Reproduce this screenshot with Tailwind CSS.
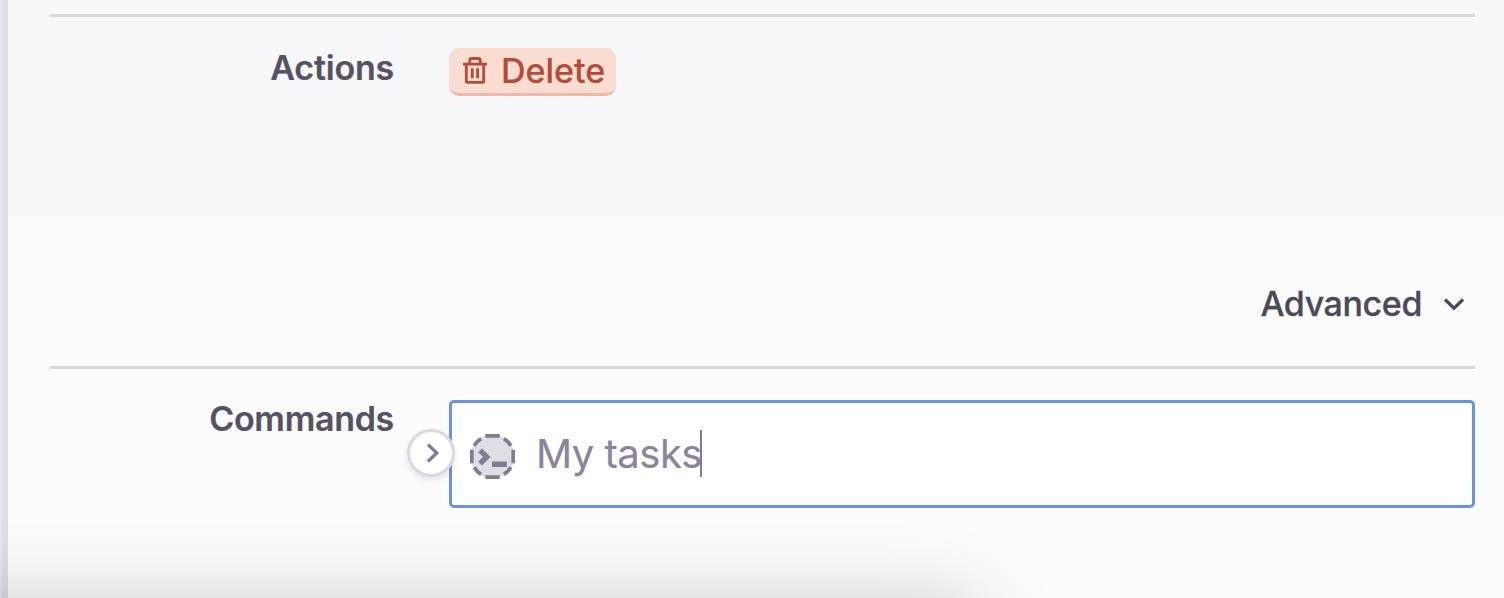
<!DOCTYPE html>
<html lang="en">
<head>
<meta charset="utf-8">
<title>Settings</title>
<script src="https://cdn.jsdelivr.net/npm/@tailwindcss/browser@4"></script>
</head>
<body class="relative flex h-[598px] w-[1504px] overflow-hidden bg-[#fcfcfc] font-['Inter',sans-serif] text-[34px] leading-[48px] text-[#545263]">
  <div class="w-2 shrink-0 border-l-2 border-[#e7e7ec] bg-[#dedde4]"></div>
  <main class="flex flex-1 flex-col">
    <section class="h-[218px] bg-[#f8f8fa] pr-[29px] pl-[42px] pt-[14px]">
      <div class="flex border-t-3 border-[#d9d8e0] pt-[31px]">
        <div class="-mt-1 w-[344px] text-right font-semibold tracking-[-0.2px] [-webkit-text-stroke:0.2px]"><span>Actions</span></div>
        <button class="ml-[55px] flex h-12 w-[167px] items-center rounded-[10px] border-b-3 border-[#efb9a7] bg-[#f9ddd0] pl-[13px] font-medium text-[#b54b3a]">
          <svg class="h-[27px] w-[26px] shrink-0" viewBox="0 0 26 27" fill="none" stroke="currentColor" stroke-width="2.8"><path d="M1 7.2H25M4.3 7V24.2Q4.3 25.3 5.4 25.3H20.6Q21.7 25.3 21.7 24.2V7M7.8 7V3.2Q7.8 1.5 9.5 1.5H16.5Q18.2 1.5 18.2 3.2V7M10.3 11.2V21.2M15.6 11.2V21.2"/></svg>
          <span class="ml-[13px] [-webkit-text-stroke:0.2px]">Delete</span>
        </button>
      </div>
    </section>
    <section class="flex flex-1 flex-col pr-[29px] pl-[42px]">
      <div class="flex h-[148px] items-center justify-end pt-[24px] pr-[10px] font-medium text-[#4b4a58]">
        <span class="tracking-[-0.4px] [-webkit-text-stroke:0.3px]">Advanced</span>
        <svg class="ml-[21px] h-[14px] w-[22px]" viewBox="0 0 22 14" fill="none" stroke="currentColor" stroke-width="3.2"><path d="M2 2.5L11 11.2L20 2.5"/></svg>
      </div>
      <div class="flex border-t-3 border-[#d9d8e0] pt-[31px]">
        <div class="-mt-[5px] w-[344px] text-right font-semibold tracking-[-0.3px] [-webkit-text-stroke:0.2px]"><span>Commands</span></div>
        <div class="relative ml-[55px] flex h-[108px] w-[1026px] items-center rounded-[5px] border-3 border-[#6b94e0] bg-white pl-[18px]">
          <button class="absolute top-[26px] -left-[45px] flex size-12 items-center justify-center rounded-full border-3 border-[#dad9e2] bg-white text-[#7f7b91] shadow-[0_3px_6px_rgba(0,0,0,0.1)]">
            <svg class="ml-[3px] h-[20px] w-[14px]" viewBox="0 0 14 20" fill="none" stroke="currentColor" stroke-width="3.2"><path d="M2 1.5L10.8 10L2 18.5"/></svg>
          </button>
          <svg class="mt-[4px] size-[45px] shrink-0 text-[#7f7b91]" viewBox="0 0 47 47" fill="none" stroke="currentColor">
            <circle cx="23.5" cy="23.5" r="23" fill="#dfdee5" stroke="none"/>
            <path stroke-width="3.8" d="M16 1.9H31M16 45.1H31M1.9 16.5V30.5M45.1 16.5V30.5M4.3 12.3Q7.3 7.3 11.6 4.8M35.4 4.8Q39.7 7.3 42.7 12.3M4.3 34.7Q7.3 39.7 11.6 42.2M35.4 42.2Q39.7 39.7 42.7 34.7"/>
            <path stroke-width="5.6" d="M10.5 17L17.5 24L10.5 31M23 31.6H38.5"/>
          </svg>
          <div class="ml-[21px] flex items-center text-[40px] tracking-[-0.5px] text-[#8a859b]"><span class="[-webkit-text-stroke:0.2px]">My tasks</span><i class="-mt-0.5 -ml-[2px] h-[47px] w-[2px] bg-[#7f7b91]"></i></div>
        </div>
      </div>
    </section>
  </main>
  <div class="pointer-events-none absolute inset-0 overflow-hidden">
    <div class="absolute top-[604px] -left-[200px] h-[400px] w-[1180px] rounded-[20px] shadow-[0_0_80px_rgba(0,0,0,0.21)]"></div>
  </div>
</body>
</html>
